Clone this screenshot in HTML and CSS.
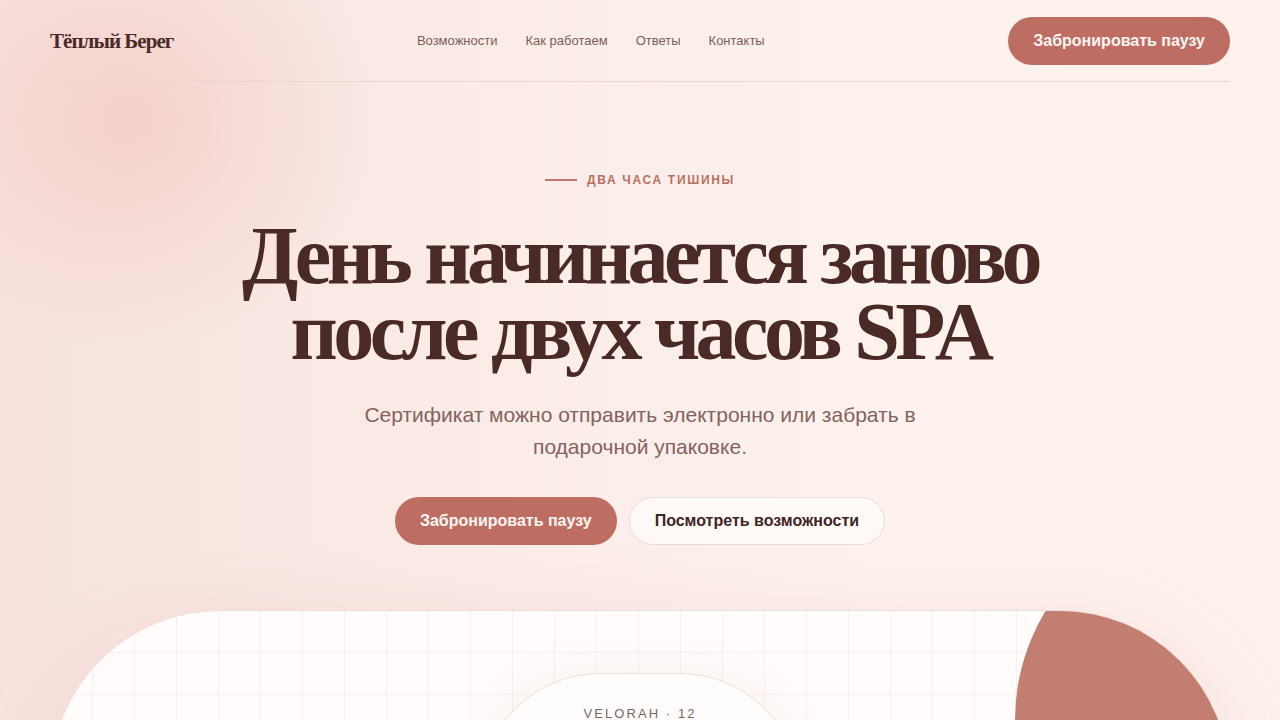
FILE: index.html
```html
<!DOCTYPE html>
<html lang="ru">
<head>
<meta charset="utf-8">
<title>Тёплый Берег</title>
<link rel="stylesheet" href="styles.css">
</head>
<body>
<div class="page">
  <div class="glow"></div>
  <header class="header">
    <div class="logo">Тёплый Берег</div>
    <nav class="nav">
      <a href="#">Возможности</a>
      <a href="#">Как работаем</a>
      <a href="#">Ответы</a>
      <a href="#">Контакты</a>
    </nav>
    <a class="btn btn-primary" href="#">Забронировать паузу</a>
  </header>
  <main class="hero">
    <div class="eyebrow"><span class="eyebrow-line"></span>ДВА ЧАСА ТИШИНЫ</div>
    <h1 class="title">День начинается заново<br>после двух часов SPA</h1>
    <p class="lead">Сертификат можно отправить электронно или забрать в подарочной упаковке.</p>
    <div class="actions">
      <a class="btn btn-primary" href="#">Забронировать паузу</a>
      <a class="btn btn-secondary" href="#">Посмотреть возможности</a>
    </div>
  </main>
  <section class="stage">
    <div class="blob"></div>
    <div class="pill">
      <div class="pill-label">VELORAH · 12</div>
    </div>
  </section>
</div>
</body>
</html>
```

FILE: styles.css
```css
* { box-sizing: border-box; }
html, body { margin: 0; padding: 0; }
body {
  font-family: "Liberation Sans", Arial, sans-serif;
  color: #4a2a27;
  height: 720px;
  overflow: hidden;
  background: linear-gradient(90deg, #f8e3de 0%, #fbece8 40%, #fdf2ee 70%, #fdf1ed 100%);
}
.page {
  position: relative;
  width: 1180px;
  margin: 0 auto;
}
.glow {
  position: absolute;
  left: -170px;
  top: -110px;
  width: 500px;
  height: 460px;
  border-radius: 50%;
  background: radial-gradient(closest-side, rgba(240, 192, 186, 0.55), rgba(240, 192, 186, 0));
  pointer-events: none;
}
.header {
  position: relative;
  display: flex;
  align-items: center;
  justify-content: space-between;
  padding: 17px 0 16px;
  border-bottom: 1px solid #ead4cf;
}
.logo {
  font-family: "Liberation Serif", "Times New Roman", serif;
  font-weight: 700;
  font-size: 21px;
  letter-spacing: -0.045em;
  color: #4a2a27;
}
.nav {
  display: flex;
  gap: 28px;
  margin-top: -1px;
}
.nav a {
  font-size: 13px;
  color: #7e5d59;
  text-decoration: none;
}
.btn {
  display: inline-flex;
  align-items: center;
  justify-content: center;
  height: 48px;
  padding: 0 25px;
  border-radius: 999px;
  font-size: 16px;
  font-weight: 700;
  text-decoration: none;
}
.btn-primary {
  background: #bd6d62;
  color: #fff6f3;
}
.btn-secondary {
  background: #fffaf8;
  color: #3f2523;
  border: 1px solid #ecdcd7;
}
.hero {
  position: relative;
  display: flex;
  flex-direction: column;
  align-items: center;
  text-align: center;
  padding-top: 90px;
}
.eyebrow {
  display: flex;
  align-items: center;
  gap: 10px;
  font-size: 12px;
  line-height: 16px;
  font-weight: 700;
  letter-spacing: 0.14em;
  color: #b8705f;
}
.eyebrow-line {
  width: 32px;
  height: 2px;
  background: #c07a6c;
}
.title {
  margin: 30px 0 0;
  font-family: "Liberation Serif", "Times New Roman", serif;
  font-weight: 700;
  font-size: 82px;
  line-height: 76px;
  letter-spacing: -0.055em;
  color: #4a2a27;
}
.lead {
  margin: 29px 0 0;
  max-width: 600px;
  font-size: 21px;
  line-height: 32px;
  color: #86625e;
}
.actions {
  display: flex;
  gap: 12px;
  margin-top: 34px;
}
.stage {
  position: relative;
  margin-top: 65px;
  height: 420px;
  border: 1px solid #efdfdb;
  border-radius: 170px 170px 0 0;
  overflow: hidden;
  background-color: #fffcfb;
  background-image:
    linear-gradient(rgba(214, 170, 162, 0.16) 1px, transparent 1px),
    linear-gradient(90deg, rgba(214, 170, 162, 0.16) 1px, transparent 1px);
  background-size: 42px 42px;
  background-position: -1px -1px;
  box-shadow: 0 20px 80px rgba(214, 150, 140, 0.22);
  display: flex;
  justify-content: center;
}
.blob {
  position: absolute;
  left: 964px;
  top: -101px;
  width: 420px;
  height: 420px;
  border-radius: 50%;
  background: #c37e72;
}
.pill {
  position: relative;
  margin-top: 62px;
  width: 320px;
  height: 240px;
  border: 1px solid #ecdeda;
  border-radius: 120px 120px 0 0;
  background: #fffdfc;
  box-shadow: 0 10px 50px rgba(205, 140, 130, 0.14);
  display: flex;
  justify-content: center;
  padding-top: 32px;
}
.pill-label {
  font-size: 13px;
  line-height: 16px;
  letter-spacing: 0.16em;
  color: #7b6563;
}
```
